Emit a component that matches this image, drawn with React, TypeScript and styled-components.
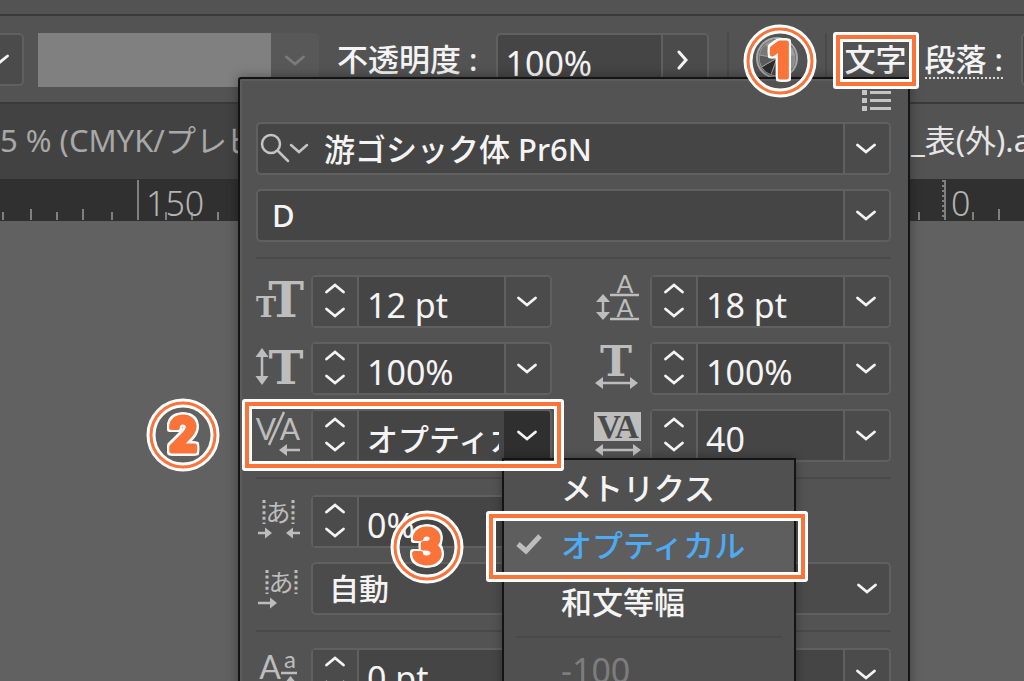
import React from "react";
import styled, { createGlobalStyle, css } from "styled-components";

const color = {
  panel: "#535353",
  field: "#454545",
  fieldSide: "#4b4b4b",
  fieldBorder: "#606060",
  rule: "#494949",
  edge: "#141414",
  text: "#f4f4f4",
  icon: "#bdbdbd",
  accent: "#fa7339",
  link: "#4eaaf3",
};

const jp = `"Noto Sans", "Noto Sans CJK JP", sans-serif`;

const GlobalStyle = createGlobalStyle`
  *, *::before, *::after { box-sizing: border-box; }
  body { margin: 0; background: #616161; font-family: ${jp}; }
  button, input, select { margin: 0; padding: 0; border: 0; background: none; color: inherit; font: inherit; border-radius: 0; outline: 0; }
`;

const Page = styled.main`
  position: relative;
  height: 100vh;
  overflow: hidden;
  background: #616161;
  color: ${color.text};
  font-size: 31px;
  font-weight: 500;
`;

/* ---------- application chrome ---------- */

const TopStrip = styled.div`
  height: 16px;
  background: ${color.panel};
  border-bottom: 2px solid #3a3a3a;
`;

const ControlBar = styled.div`
  display: flex;
  align-items: flex-start;
  gap: 18px;
  height: 88px;
  padding-top: 17px;
  background: ${color.panel};
  border-bottom: 2px solid #3a3a3a;
  > * {
    flex-shrink: 0;
  }
`;

const Group = styled.div<{ $gap?: number }>`
  display: flex;
  gap: ${(p) => p.$gap ?? 0}px;
`;

const CutSelect = styled.button`
  display: flex;
  align-items: center;
  justify-content: flex-end;
  width: 24px;
  height: 53px;
  padding-right: 13px;
  overflow: hidden;
  background: ${color.fieldSide};
  border: 2px solid ${color.fieldBorder};
  border-left: 0;
  border-radius: 0 5px 5px 0;
  svg {
    flex-shrink: 0;
  }
`;

const Swatch = styled.div`
  width: 233px;
  height: 54px;
  background: #808080;
`;

const SwatchArrow = styled.button`
  display: grid;
  place-items: center;
  width: 48px;
  height: 54px;
  background: #585858;
  border-radius: 0 5px 5px 0;
`;

const LinkLabel = styled.button`
  position: relative;
  height: 46px;
  padding-top: 8px;
  line-height: 36px;
  white-space: pre;
  border-bottom: 2px dotted #d8d8d8;
`;

const Separator = styled.div`
  width: 2px;
  height: 53px;
  background: #4a4a4a;
`;

const WheelButton = styled.button`
  display: grid;
  place-items: center;
  width: 60px;
  height: 50px;
`;

const TabBar = styled.div`
  display: flex;
  height: 75px;
  line-height: 70px;
  font-weight: 400;
  white-space: pre;
`;

const Tab = styled.button<{ $active?: boolean }>`
  flex: ${(p) => (p.$active ? "0 0 200px" : "1 1 0")};
  min-width: 0;
  overflow: hidden;
  text-align: left;
  background: ${(p) => (p.$active ? color.panel : "#424242")};
  color: ${(p) => (p.$active ? "#e6e6e6" : "#a8a8a8")};
  padding-left: ${(p) => (p.$active ? 87 : 0)}px;
  padding-bottom: 4px;
`;

const Ruler = styled.div`
  position: relative;
  height: 42px;
  background: #303030;
  color: #b4b4b4;
  font: 300 34px/42px ${jp};
  svg {
    display: block;
    width: 100%;
    height: 42px;
  }
`;

const RulerLabel = styled.span<{ $x: number }>`
  position: absolute;
  top: 3px;
  left: ${(p) => p.$x}px;
`;

/* ---------- fields ---------- */

const FieldBox = styled.div<{ $width?: number }>`
  display: flex;
  width: ${(p) => (p.$width ? `${p.$width}px` : "100%")};
  height: 53px;
  background: ${color.field};
  border: 2px solid ${color.fieldBorder};
  border-radius: 5px;
`;

const Stepper = styled.div`
  display: flex;
  flex-direction: column;
  flex: 0 0 46px;
  padding-bottom: 2px;
  background: ${color.fieldSide};
  border-right: 2px solid ${color.fieldBorder};
  button {
    flex: 1;
    display: grid;
    place-items: center;
  }
`;

const NumberInput = styled.input`
  flex: 1;
  width: 0;
  min-width: 0;
  height: 49px;
  padding: 6px 5px 0 8px;
  font: 400 34px/40px ${jp};
`;

const NameInput = styled.input`
  flex: 1;
  width: 0;
  min-width: 0;
  height: 49px;
  padding: 0 6px 2px 14px;
  font-size: 31px;
`;

const KanaInput = styled(NumberInput)`
  padding-top: 4px;
  font: 500 31px/40px ${jp};
`;

const DropButton = styled.button<{ $open?: boolean }>`
  flex: 0 0 46px;
  display: grid;
  place-items: center;
  padding-right: 3px;
  background: ${(p) => (p.$open ? "#2f2f2f" : color.fieldSide)};
  border-left: 2px solid ${(p) => (p.$open ? "#2f2f2f" : color.fieldBorder)};
  border-radius: 0 3px 3px 0;
`;

const SearchButton = styled.button`
  flex: 0 0 52px;
  display: flex;
  align-items: center;
  padding-left: 2px;
`;

const SelectBox = styled.div`
  display: grid;
  align-items: center;
  height: 53px;
  background: ${color.fieldSide};
  border: 2px solid ${color.fieldBorder};
  border-radius: 5px;
  select,
  svg {
    grid-area: 1 / 1;
  }
  select {
    appearance: none;
    width: 100%;
    height: 49px;
    padding-left: 16px;
    font-size: 30px;
  }
  svg {
    justify-self: end;
    margin-right: 12px;
    pointer-events: none;
  }
`;

/* ---------- character panel ---------- */

const Panel = styled.section`
  position: absolute;
  top: 77px;
  left: 238px;
  right: 114px;
  padding: 0 17px 14px 16px;
  background: ${color.panel};
  border: 2px solid ${color.edge};
  border-radius: 3px 3px 0 0;
  box-shadow: 0 0 12px rgba(0, 0, 0, 0.35), inset 2px 2px 0 #5c5c5c;
`;

const PanelHeader = styled.header`
  display: flex;
  justify-content: flex-end;
  align-items: flex-start;
  height: 43px;
  padding-top: 10px;
  svg {
    display: block;
  }
`;

const Rows = styled.div`
  display: flex;
  flex-direction: column;
  gap: 14px;
`;

const Rule = styled.hr`
  height: 2px;
  margin: 15px 0 16px;
  border: 0;
  background: ${color.rule};
`;

const Pair = styled.div`
  display: grid;
  grid-template-columns: 1fr 1fr;
  column-gap: 43px;
`;

const Cell = styled.div`
  position: relative;
  display: grid;
  grid-template-columns: 46px minmax(0, 1fr);
  column-gap: 9px;
  svg {
    overflow: visible;
  }
`;

const MenuAnchor = styled.div`
  position: relative;
`;

const Menu = styled.ul`
  position: absolute;
  z-index: 3;
  top: 49px;
  left: 191px;
  width: 294px;
  margin: 0;
  padding: 0;
  list-style: none;
  background: #505050;
  border: 2px solid ${color.edge};
  box-shadow: 0 0 10px rgba(0, 0, 0, 0.3);
`;

const MenuItem = styled.li<{ $selected?: boolean }>`
  position: relative;
  height: 57px;
  ${(p) =>
    p.$selected &&
    css`
      background: #5e5e5e;
      color: ${color.link};
    `}
  button {
    display: flex;
    align-items: center;
    width: 100%;
    height: 57px;
    padding-left: 11px;
    padding-bottom: 4px;
  }
`;

const CheckSlot = styled.span`
  display: flex;
  flex: 0 0 46px;
`;

const Amount = styled.span`
  font: 400 34px/40px ${jp};
  color: #7d7d7d;
`;

const MenuRule = styled.li`
  height: 2px;
  margin: 5px 12px;
  background: #494949;
`;

/* ---------- tutorial marks ---------- */

const Frame = styled.div<{ $inset: string }>`
  position: absolute;
  z-index: 5;
  inset: ${(p) => p.$inset};
  border: 3px solid #fff;
  border-radius: 3px;
  box-shadow: inset 0 0 0 4px ${color.accent}, inset 0 0 0 7px #fff;
  pointer-events: none;
`;

const Badge = styled.svg<{ $offset: number }>`
  position: absolute;
  z-index: 6;
  top: 50%;
  left: ${(p) => p.$offset}px;
  width: 74px;
  height: 74px;
  margin-top: -37px;
  overflow: visible;
`;

const Digit = styled.text`
  font: 600 46px Inter, sans-serif;
  fill: ${color.accent};
  stroke: ${color.accent};
  stroke-width: 5px;
  stroke-linejoin: round;
  text-anchor: middle;
  filter: drop-shadow(2px 0 0 #fff) drop-shadow(-2px 0 0 #fff) drop-shadow(0 2px 0 #fff) drop-shadow(0 -2px 0 #fff);
`;

function Mark({ inset, n, offset }: { inset: string; n: number; offset: number }) {
  return (
    <Frame $inset={inset}>
      <Badge $offset={offset} viewBox="0 0 74 74">
        <circle cx="37" cy="37" r="32" fill="none" stroke="#fff" strokeWidth="9" />
        <circle cx="37" cy="37" r="32" fill="none" stroke={color.accent} strokeWidth="3" />
        <Digit x="37" y="53">{n}</Digit>
      </Badge>
    </Frame>
  );
}

/* ---------- icons ---------- */

function Chevron({ up, stroke = "#f4f4f4" }: { up?: boolean; stroke?: string }) {
  return (
    <svg width="20" height="11" viewBox="0 0 20 11" aria-hidden="true">
      <path d={up ? "M1.500 9 10 2 18.500 9" : "M1.500 2 10 9 18.500 2"} fill="none" stroke={stroke} strokeWidth="2.800" strokeLinecap="round" />
    </svg>
  );
}

const IconSvg = styled.svg`
  display: block;
  width: 46px;
  height: 53px;
  fill: ${color.icon};
  stroke: none;
  line {
    fill: none;
    stroke: ${color.icon};
    stroke-width: 2.5;
  }
  .dots {
    stroke-width: 3;
    stroke-dasharray: 3 2.6;
  }
  text {
    text-anchor: middle;
  }
  .slab {
    font-family: "DejaVu Serif", serif;
    font-weight: 700;
  }
  .sans {
    font-family: Lato, sans-serif;
    font-weight: 400;
  }
  .kana {
    font: 400 25px "Noto Sans CJK JP", sans-serif;
  }
  .cut {
    font: 700 33px "Liberation Serif", serif;
    fill: #4b4b4b;
  }
`;

function Glyph({ children }: { children: React.ReactNode }) {
  return (
    <IconSvg viewBox="0 0 46 53" aria-hidden="true">
      {children}
    </IconSvg>
  );
}

const SizeIcon = () => (
  <Glyph>
    <text className="slab" x="30" y="42" fontSize="48">T</text>
    <text className="slab" x="10" y="42" fontSize="27">T</text>
  </Glyph>
);
const HeightIcon = () => (
  <Glyph>
    <line x1="6" y1="12" x2="6" y2="38" />
    <path d="M6 6 12.500 15H-.5ZM6 43 12.500 34H-.5Z" />
    <text className="slab" x="30" y="42" fontSize="47">T</text>
  </Glyph>
);
const KerningIcon = () => (
  <Glyph>
    <text className="sans" x="10" y="31" fontSize="30">V</text>
    <text className="sans" x="34" y="31" fontSize="30">A</text>
    <line x1="28" y1="3" x2="13" y2="36" />
    <line x1="29" y1="41" x2="44" y2="41" />
    <path d="M23 41 31 35V47Z" />
  </Glyph>
);
const LeadingIcon = () => (
  <Glyph>
    <text className="sans" x="30" y="18" fontSize="25">A</text>
    <line x1="15" y1="20" x2="44" y2="20" />
    <text className="sans" x="30" y="42" fontSize="25">A</text>
    <line x1="15" y1="44" x2="44" y2="44" />
    <line x1="8" y1="24" x2="8" y2="39" />
    <path d="M8 19 15 27H1ZM8 45 15 37H1Z" />
  </Glyph>
);
const WidthIcon = () => (
  <Glyph>
    <text className="slab" x="21" y="34" fontSize="43">T</text>
    <line x1="5" y1="41" x2="38" y2="41" />
    <path d="M0 41 8 35V47ZM43 41 35 35V47Z" />
  </Glyph>
);
const TrackingIcon = () => (
  <Glyph>
    <rect x="-1" y="3" width="47" height="29" />
    <text className="cut" x="14" y="29">V</text>
    <text className="cut" x="32" y="29">A</text>
    <line x1="5" y1="41" x2="41" y2="41" />
    <path d="M0 41 8 35V47ZM46 41 38 35V47Z" />
  </Glyph>
);
const TsumeIcon = () => (
  <Glyph>
    <text className="kana" x="22" y="27">あ</text>
    <line className="dots" x1="8" y1="5" x2="8" y2="29" />
    <line className="dots" x1="37" y1="5" x2="37" y2="29" />
    <line x1="2" y1="38" x2="11" y2="38" />
    <line x1="35" y1="38" x2="44" y2="38" />
    <path d="M16 38 9 32.500V43.500ZM30 38 37 32.500V43.500Z" />
  </Glyph>
);
const AkiIcon = () => (
  <Glyph>
    <text className="kana" x="25" y="30">あ</text>
    <line className="dots" x1="11" y1="8" x2="11" y2="32" />
    <line className="dots" x1="40" y1="8" x2="40" y2="32" />
    <line x1="2" y1="41" x2="15" y2="41" />
    <path d="M21 41 14 35.500V46.500Z" />
  </Glyph>
);
const BaselineIcon = () => (
  <Glyph>
    <text className="sans" x="14" y="31" fontSize="32">A</text>
    <text className="sans" x="34" y="20" fontSize="24">a</text>
    <line x1="25" y1="25" x2="41" y2="25" />
    <path d="M34.500 28 41 36H28Z" />
  </Glyph>
);

function WheelIcon() {
  const shades = ["#b9b9b9", "#a2a2a2", "#8b8b8b", "#6f6f6f", "#444", "#2b2b2b", "#5a5a5a", "#777", "#979797"];
  const point = (i: number) => {
    const a = (i * 2 * Math.PI) / shades.length - Math.PI / 2;
    return `${22 + 18 * Math.cos(a)} ${22 + 18 * Math.sin(a)}`;
  };
  return (
    <svg width="44" height="44" viewBox="0 0 44 44" aria-hidden="true">
      <circle cx="22" cy="22" r="20" fill="#666" stroke="#a8a8a8" strokeWidth="2" />
      {shades.map((s, i) => (
        <path key={i} d={`M22 22 L${point(i)} A18 18 0 0 1 ${point(i + 1)}Z`} fill={s} stroke="#999" strokeWidth="1" />
      ))}
    </svg>
  );
}

/* ---------- composed controls ---------- */

interface NumberFieldProps {
  label: string;
  value: string;
  open?: boolean;
  kana?: boolean;
}

function NumberField({ label, value, open, kana }: NumberFieldProps) {
  const Input = kana ? KanaInput : NumberInput;
  return (
    <FieldBox>
      <Stepper>
        <button aria-label={`${label} +`}><Chevron up /></button>
        <button aria-label={`${label} -`}><Chevron /></button>
      </Stepper>
      <Input aria-label={label} defaultValue={value} />
      <DropButton $open={open} aria-label={`${label} ▾`} aria-expanded={!!open}>
        <Chevron />
      </DropButton>
    </FieldBox>
  );
}

function SelectField({ label, value }: { label: string; value: string }) {
  return (
    <SelectBox>
      <select aria-label={label} defaultValue={value}>
        <option value={value}>{value}</option>
      </select>
      <Chevron />
    </SelectBox>
  );
}

const ticks: [number, number][] = [
  [3, 33], [31, 30], [57, 33], [83, 30], [112, 33], [138, 1], [166, 33], [192, 33], [218, 33],
  [919, 33], [973, 33], [999, 30],
];

export default function App() {
  return (
    <Page>
      <GlobalStyle />
      <TopStrip />
      <ControlBar>
        <Group $gap={14}>
          <CutSelect aria-label="プロファイル"><Chevron /></CutSelect>
          <Group>
            <Swatch />
            <SwatchArrow disabled aria-label="ブラシ"><Chevron stroke="#7b7b7b" /></SwatchArrow>
          </Group>
        </Group>
        <Group $gap={18}>
          <LinkLabel>不透明度 :</LinkLabel>
          <FieldBox $width={213}>
            <NumberInput aria-label="不透明度" defaultValue="100%" />
            <DropButton aria-label="不透明度 ▸">
              <svg width="12" height="20" viewBox="0 0 12 20" aria-hidden="true">
                <path d="M2 2 9 10 2 18" fill="none" stroke="#f4f4f4" strokeWidth="3" strokeLinecap="round" />
              </svg>
            </DropButton>
          </FieldBox>
        </Group>
        <Separator />
        <WheelButton aria-label="オブジェクトを再配色"><WheelIcon /></WheelButton>
        <Separator />
        <LinkLabel>
          文字
          <Mark inset="-1px -12px -12px -12px" n={1} offset={-93} />
        </LinkLabel>
        <LinkLabel>段落 :</LinkLabel>
        <FieldBox $width={120} />
      </ControlBar>
      <TabBar>
        <Tab>5 % (CMYK/プレビュー)</Tab>
        <Tab $active>_表(外).ai</Tab>
      </TabBar>
      <Ruler>
        <svg aria-hidden="true">
          {ticks.map(([x, y]) => (
            <line key={x} x1={x} x2={x} y1={y} y2="41" stroke="#808080" strokeWidth="2" />
          ))}
          <line x1="945" x2="945" y1="1" y2="41" stroke="#808080" strokeWidth="2" />
          <line x1="943" x2="943" y1="1" y2="41" stroke="#808080" strokeWidth="2" strokeDasharray="2 3" />
        </svg>
        <RulerLabel $x={146}>150</RulerLabel>
        <RulerLabel $x={951}>0</RulerLabel>
      </Ruler>

      <Panel aria-label="文字">
        <PanelHeader>
          <button aria-label="パネルメニュー">
            <svg width="29" height="22" viewBox="0 0 29 22" aria-hidden="true" fill="#c4c4c4">
              {[1, 9, 17].map((y) => (
                <g key={y}>
                  <rect x="0" y={y} width="5" height="5" />
                  <rect x="8" y={y + 1} width="21" height="3" />
                </g>
              ))}
            </svg>
          </button>
        </PanelHeader>

        <Rows>
          <FieldBox>
            <SearchButton aria-label="検索">
              <svg width="50" height="32" viewBox="0 0 50 32" aria-hidden="true" fill="none" stroke="#c4c4c4" strokeWidth="2.500" strokeLinecap="round">
                <circle cx="11" cy="11" r="9" />
                <path d="M18 18 28 28M31 12 39 19 47 12" />
              </svg>
            </SearchButton>
            <NameInput aria-label="フォント" defaultValue="游ゴシック体 Pr6N" />
            <DropButton aria-label="フォント ▾"><Chevron /></DropButton>
          </FieldBox>
          <FieldBox>
            <NameInput aria-label="スタイル" defaultValue="D" />
            <DropButton aria-label="スタイル ▾"><Chevron /></DropButton>
          </FieldBox>
        </Rows>
        <Rule />
        <Rows>
          <Pair>
            <Cell><SizeIcon /><NumberField label="サイズ" value="12 pt" /></Cell>
            <Cell><LeadingIcon /><NumberField label="行送り" value="18 pt" /></Cell>
          </Pair>
          <Pair>
            <Cell><HeightIcon /><NumberField label="垂直比率" value="100%" /></Cell>
            <Cell><WidthIcon /><NumberField label="水平比率" value="100%" /></Cell>
          </Pair>
          <Pair>
            <Cell>
              <KerningIcon />
              <MenuAnchor>
                <NumberField label="カーニング" value="オプティカル" open kana />
                <Menu aria-label="カーニング">
                  <MenuItem>
                    <button><CheckSlot />メトリクス</button>
                  </MenuItem>
                  <MenuItem $selected>
                    <button>
                      <CheckSlot>
                        <svg width="30" height="22" viewBox="0 0 30 22" aria-hidden="true">
                          <path d="M3 11 11 18 25 3" fill="none" stroke="#bdbdbd" strokeWidth="5" />
                        </svg>
                      </CheckSlot>
                      オプティカル
                    </button>
                    <Mark inset="-6px -14px -8px -18px" n={3} offset={-99} />
                  </MenuItem>
                  <MenuItem>
                    <button><CheckSlot />和文等幅</button>
                  </MenuItem>
                  <MenuRule role="separator" />
                  <MenuItem>
                    <button><CheckSlot /><Amount>-100</Amount></button>
                  </MenuItem>
                </Menu>
              </MenuAnchor>
              <Mark inset="-10px -12px -9px -14px" n={2} offset={-99} />
            </Cell>
            <Cell><TrackingIcon /><NumberField label="トラッキング" value="40" /></Cell>
          </Pair>
        </Rows>
        <Rule />
        <Rows>
          <Pair>
            <Cell><TsumeIcon /><NumberField label="文字ツメ" value="0%" /></Cell>
          </Pair>
          <Pair>
            <Cell><AkiIcon /><SelectField label="アキを挿入（左）" value="自動" /></Cell>
            <Cell><span /><SelectField label="アキを挿入（右）" value="" /></Cell>
          </Pair>
        </Rows>
        <Rule />
        <Rows>
          <Pair>
            <Cell><BaselineIcon /><NumberField label="ベースラインシフト" value="0 pt" /></Cell>
            <Cell><span /><NumberField label="文字回転" value="" /></Cell>
          </Pair>
        </Rows>
      </Panel>
    </Page>
  );
}
